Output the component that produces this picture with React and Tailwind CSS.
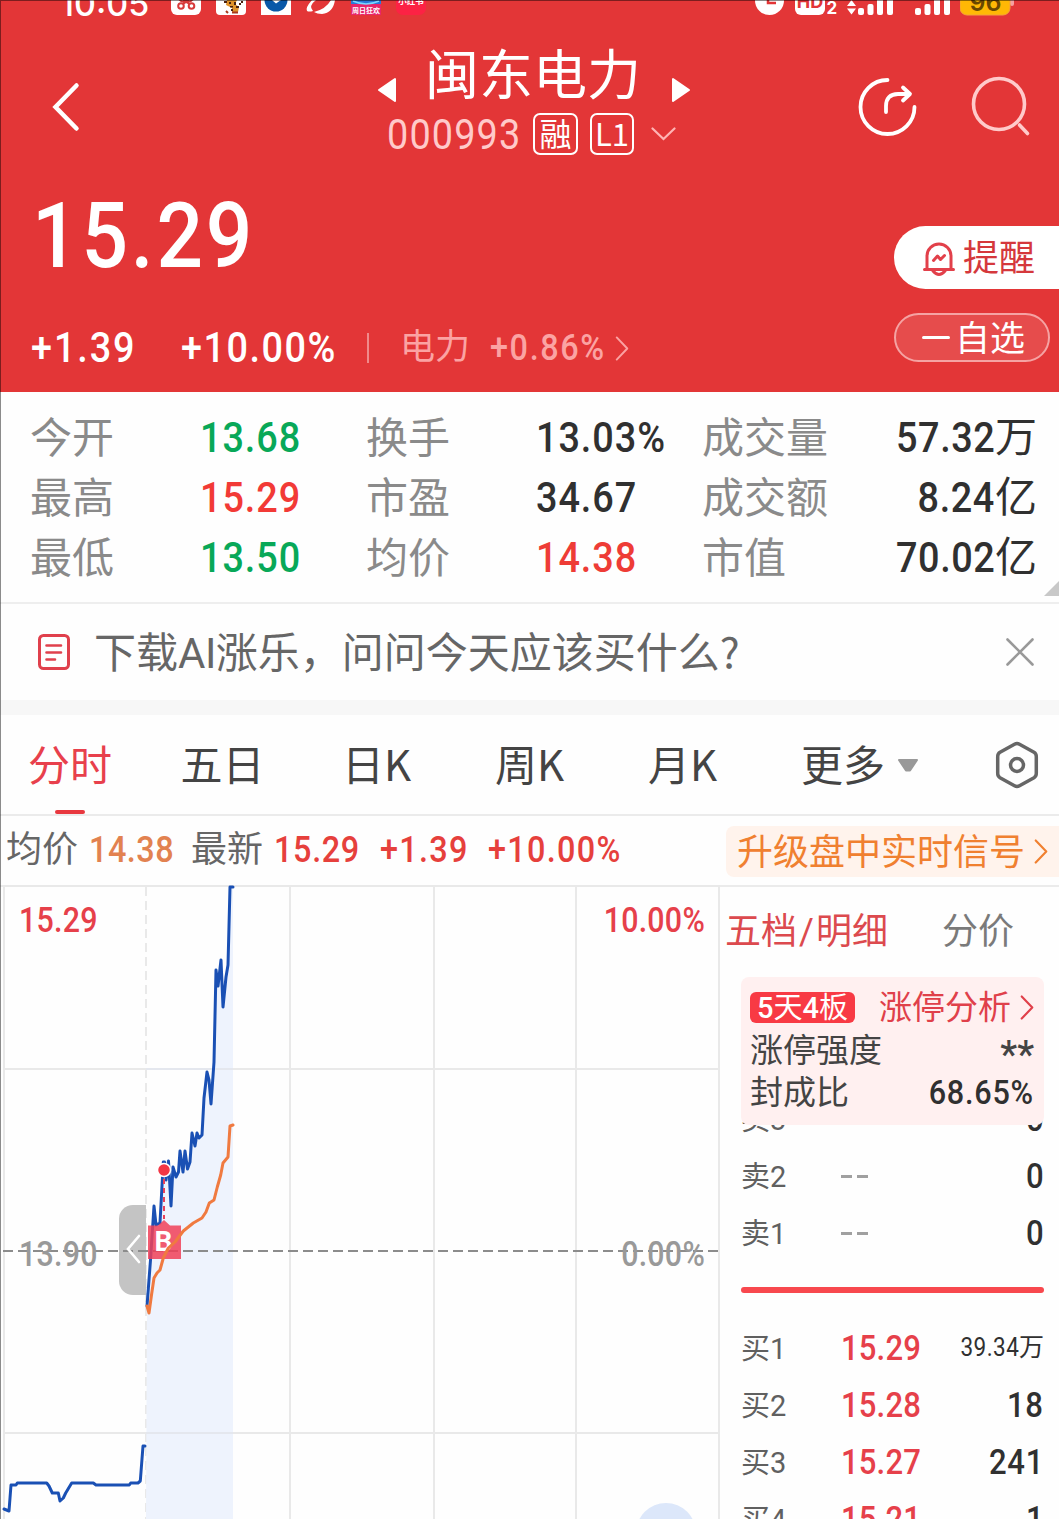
import React from 'react';
import clsx from 'clsx';

const stats = [
  [
    { label: '今开', value: '13.68', color: 'text-[#08a858]' },
    { label: '换手', value: '13.03%', color: 'text-[#303030]' },
    { label: '成交量', value: '57.32万', color: 'text-[#303030]' },
  ],
  [
    { label: '最高', value: '15.29', color: 'text-[#f23a36]' },
    { label: '市盈', value: '34.67', color: 'text-[#303030]' },
    { label: '成交额', value: '8.24亿', color: 'text-[#303030]' },
  ],
  [
    { label: '最低', value: '13.50', color: 'text-[#08a858]' },
    { label: '均价', value: '14.38', color: 'text-[#ee3c36]' },
    { label: '市值', value: '70.02亿', color: 'text-[#303030]' },
  ],
];

const sells = [
  { name: '卖3', volume: '0' },
  { name: '卖2', volume: '0' },
  { name: '卖1', volume: '0' },
];

const buys = [
  { name: '买1', price: '15.29', volume: '39.34万', small: true },
  { name: '买2', price: '15.28', volume: '18' },
  { name: '买3', price: '15.27', volume: '241' },
  { name: '买4', price: '15.21', volume: '1' },
];

// chart points, in chart pixels
const pricePoints =
  '147,421 150.5,375 154,321 156,340 160,338 163.3,277 164.5,277 166,295 168.5,276 171,321 173,282 176,292 178.5,287 180,266 183,287 185,266 187.5,284 190,277 192,248 195,261 197,248 199,253 202,250 204,213 207,187 209,195 211,219 214,177 216,85 218,101 221,75 223,122 226,92 228,80 230,2 233,2';
const avgPoints =
  '147,421 149,428 151.5,410 154,393 157,388 160,385 163.3,373 168.3,363 175,357 183.3,346 193.3,338 202,333 206,327 209.3,318 214,315 217.3,302 220.7,290 223,278 228,272 230,241 233,240';
const prePoints =
  '4,624 9,626 11,600 16,600 17.3,598 46.7,598 49,601 52.3,608 58.3,608 60,616 63.3,613 65.7,608 71.7,598 93.3,598 96,600 129.3,600 130.7,598 138,598 140.3,596 143,561 145,561';

function Arrow({ className, width = 2.5 }) {
  return (
    <svg className={className} viewBox="0 0 14 26" fill="none" stroke="currentColor" strokeWidth={width} strokeLinecap="round" strokeLinejoin="round">
      <path d="M1.5 1.5 L12.5 13 L1.5 24.5" />
    </svg>
  );
}

function Cjk({ children }) {
  return <span className="font-['Noto_Sans_CJK_SC',sans-serif] leading-none">{children}</span>;
}

// narrow figures with a little air between them
function Num({ children, right, className = 'tracking-[0.05em]' }) {
  return (
    <span className={clsx('inline-block scale-x-90', right ? 'origin-right' : 'origin-left', className)}>{children}</span>
  );
}

function SignalBars() {
  return (
    <svg className="h-[16px] w-[36px]" viewBox="0 0 36 16" fill="#fff">
      <rect x="0" y="8" width="6" height="7" rx="2" />
      <rect x="9.5" y="4" width="6" height="11" rx="2" />
      <rect x="19" y="-2" width="6" height="17" rx="2" />
      <rect x="29" y="-6" width="6" height="21" rx="2" />
    </svg>
  );
}

function StatusBar() {
  return (
    <div className="flex h-[16px] items-end overflow-hidden pl-[60px] text-white">
      <div className="w-[111px] font-[Inter,sans-serif] text-[34px] font-medium leading-[25px]">10:05</div>
      <svg className="h-[16px] w-[256px]" viewBox="0 0 256 16">
        <rect x="0" y="-15" width="30" height="30" rx="6" fill="#fff" />
        <g fill="none" stroke="#d83a3a" strokeWidth="2">
          <circle cx="10" cy="6" r="2.800" />
          <circle cx="20.500" cy="6" r="2.800" />
          <path d="M8 -1 Q11 3 15 1 Q19 3 22 -1 M12 4 L18 0 M18.500 4 L12 0" />
        </g>
        <rect x="45" y="-15" width="30" height="30" rx="4" fill="#fff" />
        <path d="M56 0 L66 0 L64 4 L68 7 L67 12 L61 13 L61 8 L55 5 Z" fill="#e0932a" />
        <path d="M53 1 h3 v2 h-3z M58 2 h2 v2 h-2z M63 2 h2 v3 h-2z M59 6 h3 v1.500 h-3z M65 6 h3 v2 h-3z M60 9 h2 v2 h-2z M70 1 h2 v2 h-2z M68 3 h2 v2 h-2z" fill="#4a2210" />
        <path d="M61 12.500 h6 M55 11 l2 2" stroke="#a83a1c" strokeWidth="2" />
        <rect x="90" y="-15" width="30" height="30" fill="#fff" />
        <circle cx="105" cy="0" r="11.500" fill="#0858a8" />
        <path d="M101 0 L105 3.500 L110 0 Z" fill="#fff" />
        <path d="M143 12 Q155 9 160 0 H164 Q162 13 151 14 Q146 14 143 12Z" fill="#fff" />
        <path d="M145 0 Q137 6 142 11 Q138 12 136 11 Q134 8 141 0Z" fill="#fff" />
        <rect x="180" y="-15" width="30" height="30" fill="#e8246a" />
        <rect x="180" y="-15" width="30" height="19" fill="#2a78d8" />
        <path d="M182 1 Q195 7 208 1" stroke="#7ad8ff" strokeWidth="1.500" fill="none" />
        <text x="195" y="12.500" textAnchor="middle" fontSize="7" fontWeight="700" fill="#fff" fontFamily="Noto Sans CJK SC">周日狂欢</text>
        <rect x="225" y="-15" width="30" height="30" rx="7" fill="#fc2244" />
        <text x="240" y="3.500" textAnchor="middle" fontSize="8.500" fontWeight="700" fill="#fff" fontFamily="Noto Sans CJK SC">小红书</text>
      </svg>
      <svg className="ml-[328px] h-[16px] w-[83px]" viewBox="0 0 83 16">
        <circle cx="14.500" cy="0.500" r="14.500" fill="#fff" />
        <path d="M13 -5 V3 H21" fill="none" stroke="#e23537" strokeWidth="2.500" />
        <rect x="40" y="-10" width="30" height="25" rx="6" fill="#fff" />
        <text x="55" y="7.500" textAnchor="middle" fontSize="18" fontWeight="700" fill="#e23537" fontFamily="Inter">HD</text>
        <text x="71.500" y="14" fontSize="17" fontWeight="700" fill="#fff" fontFamily="Inter">2</text>
      </svg>
      <svg className="ml-[9px] mr-[2px] h-[16px] w-[9px]" viewBox="0 0 9 16" fill="#fff">
        <path d="M4.500 0 L9 6 H0 Z M4.500 14.500 L9 8.500 H0 Z" />
      </svg>
      <SignalBars />
      <div className="w-[21px]" />
      <SignalBars />
      <svg className="ml-[9px] h-[16px] w-[54px]" viewBox="0 0 54 16">
        <rect x="50" y="-6" width="4" height="12" rx="2" fill="#f6a0a0" />
        <rect x="0" y="-15" width="50" height="30" rx="7" fill="#ffb805" stroke="#f5a03c" strokeWidth="1" />
        <text x="25.500" y="10.500" textAnchor="middle" fontSize="25" fontWeight="600" fill="#6a4800" fontFamily="Inter">96</text>
      </svg>
    </div>
  );
}

function Header() {
  return (
    <header className="h-[392px] overflow-hidden bg-[#e33637] text-white">
      <StatusBar />
      <div className="flex h-[152px] pl-[51px]">
        <svg className="mt-[66px] h-[50px] w-[30px]" viewBox="0 0 30 50" fill="none" stroke="#fff" strokeWidth="4.500" strokeLinecap="round" strokeLinejoin="miter">
          <path d="M25.500 3.500 L4.500 25 L25.500 46.500" />
        </svg>
        <div className="ml-[296px] w-[316px]">
          <div className="flex items-start">
            <svg className="mt-[60px] h-[28px] w-[20px]" viewBox="0 0 20 28" fill="#fff" stroke="#fff" strokeWidth="2" strokeLinejoin="round">
              <path d="M18 3 V25 L2 14 Z" />
            </svg>
            <div className="ml-[28px] mt-[28px] h-[64px] w-[218px] whitespace-nowrap text-[54px] leading-[66px]">闽东电力</div>
            <svg className="ml-[28px] mt-[60px] h-[28px] w-[20px]" viewBox="0 0 20 28" fill="#fff" stroke="#fff" strokeWidth="2" strokeLinejoin="round">
              <path d="M2 3 V25 L18 14 Z" />
            </svg>
          </div>
          <div className="mt-[5px] flex h-[42px] items-center pl-[10px]">
            <div className="w-[146px] pt-px text-[42px] leading-[42px] text-[#ffcaca]">
              <Num className="tracking-[0.03em]">000993</Num>
            </div>
            <div className="flex h-[42px] w-[45px] shrink-0 items-center justify-center rounded-[7px] border-2 border-white pt-[2px] text-[32px] leading-[36px]">融</div>
            <div className="ml-[12px] flex h-[42px] w-[44px] shrink-0 items-center justify-center rounded-[7px] border-2 border-white pb-[4px] text-[31px] leading-[34px]">
              <Cjk>L1</Cjk>
            </div>
            <svg className="ml-[17px] h-[14px] w-[25px] shrink-0" viewBox="0 0 25 14" fill="none" stroke="#ffb4b4" strokeWidth="2.200" strokeLinecap="round">
              <path d="M1.500 1.500 L12.500 12 L23.500 1.500" />
            </svg>
          </div>
        </div>
        <svg className="ml-[163px] mt-[60px] h-[62px] w-[62px]" viewBox="0 0 62 62" fill="none" stroke="#fff" strokeWidth="3.800" strokeLinecap="round" strokeLinejoin="round">
          <path d="M31.500 4 A27 27 0 1 0 58.500 31" />
          <path d="M30 36 V30 Q30 18 42 18 H53 M47 11.500 L54 18 L47 24.500" />
        </svg>
        <svg className="ml-[53px] mt-[60px] h-[62px] w-[62px]" viewBox="0 0 62 62" fill="none" stroke="#ffcaca" strokeWidth="3.600" strokeLinecap="round">
          <circle cx="28" cy="28" r="25.500" />
          <path d="M48.500 49 L56.500 57.500" />
        </svg>
      </div>
      <div className="flex justify-between">
        <div className="pl-[31px]">
          <div className="h-[134px] pl-px pt-[2px] text-[91px] font-medium leading-[132px]">
            <Num className="tracking-[0.035em]">15.29</Num>
          </div>
          <div className="mt-[20px] flex h-[52px] items-center text-[42px] leading-[52px]">
            <div className="w-[150px] font-medium"><Num>+1.39</Num></div>
            <div className="w-[186px] font-medium"><Num className="tracking-[0.04em]">+10.00%</Num></div>
            <div className="h-[30px] w-[2px] bg-[#f08a8a]" />
            <div className="ml-[31px] w-[90px] pb-px text-[35px] text-[#fba3a3]">电力</div>
            <div className="w-[114px] text-[36px] font-medium text-[#fba3a3]"><Num>+0.86%</Num></div>
            <Arrow className="ml-[11px] h-[25px] w-[14px] text-[#fba3a3]" width={2} />
          </div>
        </div>
        <div className="w-[165px] pt-[58px]">
          <div className="flex h-[63px] items-center rounded-l-full bg-white pl-[28px] text-[36px] text-[#d5383c]">
            <svg className="mt-[2px] h-[36px] w-[34px]" viewBox="0 0 34 36" fill="none" stroke="#e2404a" strokeWidth="3" strokeLinecap="round" strokeLinejoin="round">
              <path d="M2.500 28.500 H31.500 M5 28 V15 A12 12 0 0 1 29 15 V28 M11 30 Q17 37 23 30" />
              <path d="M11.500 19.500 L15.500 15 L18.500 18.500 L22.500 14.500" />
            </svg>
            <span className="ml-[7px] pt-[3px] leading-[60px]">提醒</span>
          </div>
          <div className="mt-[24px] flex h-[49px] w-[156px] items-center rounded-full border-2 border-[#f5a3a3] bg-[#e64c4c] pl-[26px] text-[35px] leading-[45px]">
            <span className="h-[3px] w-[28px] rounded bg-white" />
            <span className="ml-[5px] pt-[4px] leading-[41px]">自选</span>
          </div>
        </div>
      </div>
    </header>
  );
}

function Stats() {
  return (
    <section className="flex h-[212px] justify-between border-b-2 border-[#eee]">
      <div className="w-[1037px] pl-[30px] pt-[16px]">
        {stats.map((row) => (
          <div key={row[0].label} className="grid h-[60px] grid-cols-[170px_166px_170px_166px_125px_1fr] text-[42px] leading-[60px] whitespace-nowrap">
            {row.map((s, i) => (
              <React.Fragment key={s.label}>
                <div className="pt-px leading-[60px] text-[#8a8a8a]">{s.label}</div>
                <div className={clsx('font-medium', s.color, i === 2 && 'flex justify-end')}>
                  <Num right={i === 2} className={i === 2 ? 'tracking-[0.015em]' : 'tracking-[0.025em]'}>{s.value.replace(/[万亿]/, '')}</Num>
                  {/[万亿]/.test(s.value) && <span className="font-normal">{s.value.slice(-1)}</span>}
                </div>
              </React.Fragment>
            ))}
          </div>
        ))}
      </div>
      <svg className="mt-[189px] h-[15px] w-[15px]" viewBox="0 0 15 15" fill="#c8c8c8">
        <path d="M15 0 V15 H0 Z" />
      </svg>
    </section>
  );
}

function Banner() {
  return (
    <section className="flex h-[111px] items-center border-b-[15px] border-[#f7f7f7] pl-[37px]">
      <svg className="h-[38px] w-[34px]" viewBox="0 0 34 38" fill="none" stroke="#e0404c" strokeWidth="3">
        <rect x="2.500" y="2.500" width="29" height="33" rx="4" />
        <path d="M9.500 12.500 H24 M9.500 19.500 H24 M9.500 26.500 H18" strokeWidth="2.600" strokeLinecap="round" />
      </svg>
      <div className="ml-[23px] w-[912px] pt-[4px] text-[42px] leading-[92px] text-[#666]">
        下载<span className="tracking-[-0.5px]">AI</span>涨乐，问问今天应该买什么<Cjk>?</Cjk>
      </div>
      <svg className="h-[28px] w-[28px]" viewBox="0 0 28 28" stroke="#999" strokeWidth="2.600" strokeLinecap="round">
        <path d="M1.500 1.500 L26.500 26.500 M26.500 1.500 L1.500 26.500" />
      </svg>
    </section>
  );
}

function Tabs() {
  return (
    <nav className="flex h-[101px] border-b-2 border-[#ebebeb] text-[42px] leading-[103px] text-[#444]">
      <div className="flex w-[146px] flex-col items-center pr-[6px] text-[#e8404c]">
        <span className="h-[95px]">分时</span>
        <span className="h-[4px] w-[30px] rounded-full bg-[#e8383f]" />
      </div>
      <div className="w-[153px] text-center">五日</div>
      <div className="w-[155px] text-center">日<Cjk>K</Cjk></div>
      <div className="w-[151px] text-center">周<Cjk>K</Cjk></div>
      <div className="w-[155px] text-center">月<Cjk>K</Cjk></div>
      <div className="ml-[41px] w-[96px]">更多</div>
      <svg className="mt-[43px] h-[15px] w-[22px]" viewBox="0 0 22 15" fill="#999" stroke="#999" strokeWidth="2" strokeLinejoin="round">
        <path d="M2 2 H20 L13 12.500 H9 Z" />
      </svg>
      <svg className="ml-[75px] mt-[26px] h-[48px] w-[46px]" viewBox="0 0 46 48" fill="none" stroke="#666" strokeWidth="3.500" strokeLinejoin="round">
        <path d="M20.500 3.200 Q23 1.800 25.500 3.200 L40 11.300 Q42.300 12.700 42.300 15.500 V32.500 Q42.300 35.300 40 36.700 L25.500 44.800 Q23 46.200 20.500 44.800 L6 36.700 Q3.700 35.300 3.700 32.500 V15.500 Q3.700 12.700 6 11.300 Z" />
        <circle cx="23" cy="24" r="6.500" />
      </svg>
    </nav>
  );
}

function QuoteLine() {
  return (
    <section className="flex h-[71px] border-b-2 border-[#ebebeb] pl-[6px] text-[36px] leading-[68px] whitespace-nowrap">
      <div className="w-[83px] text-[#666]">均价</div>
      <div className="w-[102px] font-medium text-[#e28250]"><Num className="tracking-[0.015em]">14.38</Num></div>
      <div className="w-[83px] text-[#666]">最新</div>
      <div className="w-[106px] font-medium text-[#e6403c]"><Num className="tracking-[0.02em]">15.29</Num></div>
      <div className="w-[108px] font-medium text-[#e6403c]"><Num className="tracking-[0.04em]">+1.39</Num></div>
      <div className="w-[238px] font-medium text-[#e6403c]"><Num className="tracking-[0.04em]">+10.00%</Num></div>
      <div className="mt-[10px] flex h-[51px] grow items-center rounded-l-lg bg-[#fff3ec] pl-[11px] leading-[51px] text-[#f08030]">
        <span className="pt-[3px] leading-[48px]">升级盘中实时信号</span>
        <Arrow className="ml-[9px] h-[25px] w-[14px]" width={2.2} />
      </div>
    </section>
  );
}

function ChartLabel({ x, y, children, ...rest }) {
  return (
    <text transform={`translate(${x} ${y}) scale(0.88 1)`} letterSpacing="0.3" {...rest}>{children}</text>
  );
}

function Chart() {
  return (
    <svg className="h-[634px] w-[720px] shrink-0" viewBox="0 0 720 634" fontFamily="Roboto, sans-serif" fontSize="34.500" fontWeight="500">
      <g stroke="#e9e9e9" strokeWidth="2">
        <path d="M3 1 H720 M4 184 H719 M4 548 H719 M4 0 V634 M290 0 V634 M434 0 V634 M576 0 V634 M719 0 V634" />
        <path d="M146 2 V634" strokeDasharray="9 5" />
      </g>
      <path d={`M146,634 L${pricePoints.replaceAll(' ', ' L')} L233,634 Z`} fill="#eef3fd" />
      <path d="M146 184 H233 M146 548 H233" stroke="#e4e7ee" strokeWidth="2" />
      <path d="M119 334 a14 14 0 0 1 14 -14 H146 V410 H133 a14 14 0 0 1 -14 -14 Z" fill="#c4c4c4" />
      <path d="M3 366 H718" stroke="#8c8c8c" strokeWidth="1.800" strokeDasharray="10 5" />
      <path d="M139 351 L128 364 L139 377" fill="none" stroke="#fff" strokeWidth="2.600" strokeLinecap="round" />
      <g fill="none" strokeWidth="3" strokeLinejoin="round" strokeLinecap="round">
        <polyline points={pricePoints} stroke="#1a50b4" />
        <polyline points={prePoints} stroke="#1a50b4" />
      </g>
      <path d="M164 294 V334" stroke="#e8405a" strokeWidth="2" strokeDasharray="5 4" />
      <path d="M148 340.500 H158 L164 335 L170 340.500 H181 V374 H148 Z" fill="#f04058" fillOpacity="0.850" />
      <text x="163.500" y="366" textAnchor="middle" fontSize="28" fontWeight="700" fill="#fff">B</text>
      <polyline points={avgPoints} fill="none" stroke="#f07a40" strokeWidth="3" strokeLinejoin="round" strokeLinecap="round" />
      <circle cx="164" cy="285" r="6.500" fill="#f23645" stroke="#fff" strokeWidth="1.500" />
      <circle cx="666" cy="648" r="30" fill="#dce7fa" />
      <ChartLabel x={19} y={47} fill="#e6404a">15.29</ChartLabel>
      <ChartLabel x={705} y={47} fill="#e6404a" textAnchor="end">10.00%</ChartLabel>
      <ChartLabel x={19} y={381} fill="#999">13.90</ChartLabel>
      <ChartLabel x={705} y={381} fill="#999" textAnchor="end">0.00%</ChartLabel>
    </svg>
  );
}

function BookRow({ name, price, volume, small }) {
  return (
    <div className="flex h-[57px] shrink-0 items-center leading-[57px]">
      <div className="w-[100px] pt-[3px] text-[29px] leading-[54px] text-[#606060]">{name}</div>
      {price ? (
        <div className="pt-px text-[34.500px] font-medium leading-[56px] text-[#e6404a]"><Num className="tracking-[0.005em]">{price}</Num></div>
      ) : (
        <div className="flex gap-[5px] pt-px">
          <span className="h-[3px] w-[11px] bg-[#a0a0a0]" />
          <span className="h-[3px] w-[11px] bg-[#a0a0a0]" />
        </div>
      )}
      <div className={clsx('flex grow justify-end pt-px leading-[56px] text-[#303030]', small ? 'text-[25px]' : 'text-[34.500px] font-medium')}>
        <Num right className="tracking-[0.02em]">{volume.replace('万', '')}</Num>
        {small && '万'}
      </div>
    </div>
  );
}

function OrderBook() {
  return (
    <aside className="relative h-[634px] w-[339px] overflow-hidden">
      <div className="flex h-[92px] pl-[5px] text-[36px] leading-[95px]">
        <div className="w-[217px] text-[#dc4a4e]">五档<span className="px-[2px]">/</span>明细</div>
        <div className="text-[#7a7a7a]">分价</div>
      </div>
      <div className="mx-[15px] mt-[113px] w-[309px] pl-[6px]">
        {sells.map((s) => <BookRow key={s.name} {...s} />)}
      </div>
      <div className="ml-[21px] mt-[26px] h-[6px] w-[303px] rounded-full bg-[#f8484e]" />
      <div className="mx-[15px] mt-[26px] w-[309px] pl-[6px]">
        {buys.map((b) => <BookRow key={b.name} {...b} />)}
      </div>
      <div className="absolute left-[21px] top-[92px] h-[148px] w-[303px] rounded-lg bg-[#fff0f0] pl-[9px] pr-[10px] pt-[9px] text-[33px] text-[#444]">
        <div className="flex h-[43px] items-center">
          <div className="h-[31px] w-[105px] rounded-md bg-[#f83a44] text-center text-[29px] font-medium leading-[33px] text-white">
            5<span className="font-normal">天</span>4<span className="font-normal">板</span>
          </div>
          <div className="ml-[24px] pt-px text-[#e0404a]">涨停分析</div>
          <Arrow className="ml-auto h-[25px] w-[14px] text-[#e0404a]" width={2.2} />
        </div>
        <div className="flex h-[44px] items-center justify-between leading-[48px]">
          <span>涨停强度</span>
          <span className="pt-[8px] text-[38px] font-medium leading-[30px]">**</span>
        </div>
        <div className="flex h-[38px] items-center justify-between leading-[40px]">
          <span className="pt-px">封成比</span>
          <span className="text-[34px] font-medium leading-[38px] text-[#303030]"><Num right className="tracking-[0.025em]">68.65%</Num></span>
        </div>
      </div>
    </aside>
  );
}

export default function App() {
  return (
    <div className="relative h-[1519px] w-[1059px] overflow-hidden bg-[#fefefe] font-[Roboto,'Noto_Sans_CJK_SC',sans-serif]">
      <Header />
      <Stats />
      <Banner />
      <Tabs />
      <QuoteLine />
      <div className="-mt-[2px] flex">
        <Chart />
        <OrderBook />
      </div>
      <div className="pointer-events-none absolute inset-0 border-l border-t border-black/45" />
    </div>
  );
}
